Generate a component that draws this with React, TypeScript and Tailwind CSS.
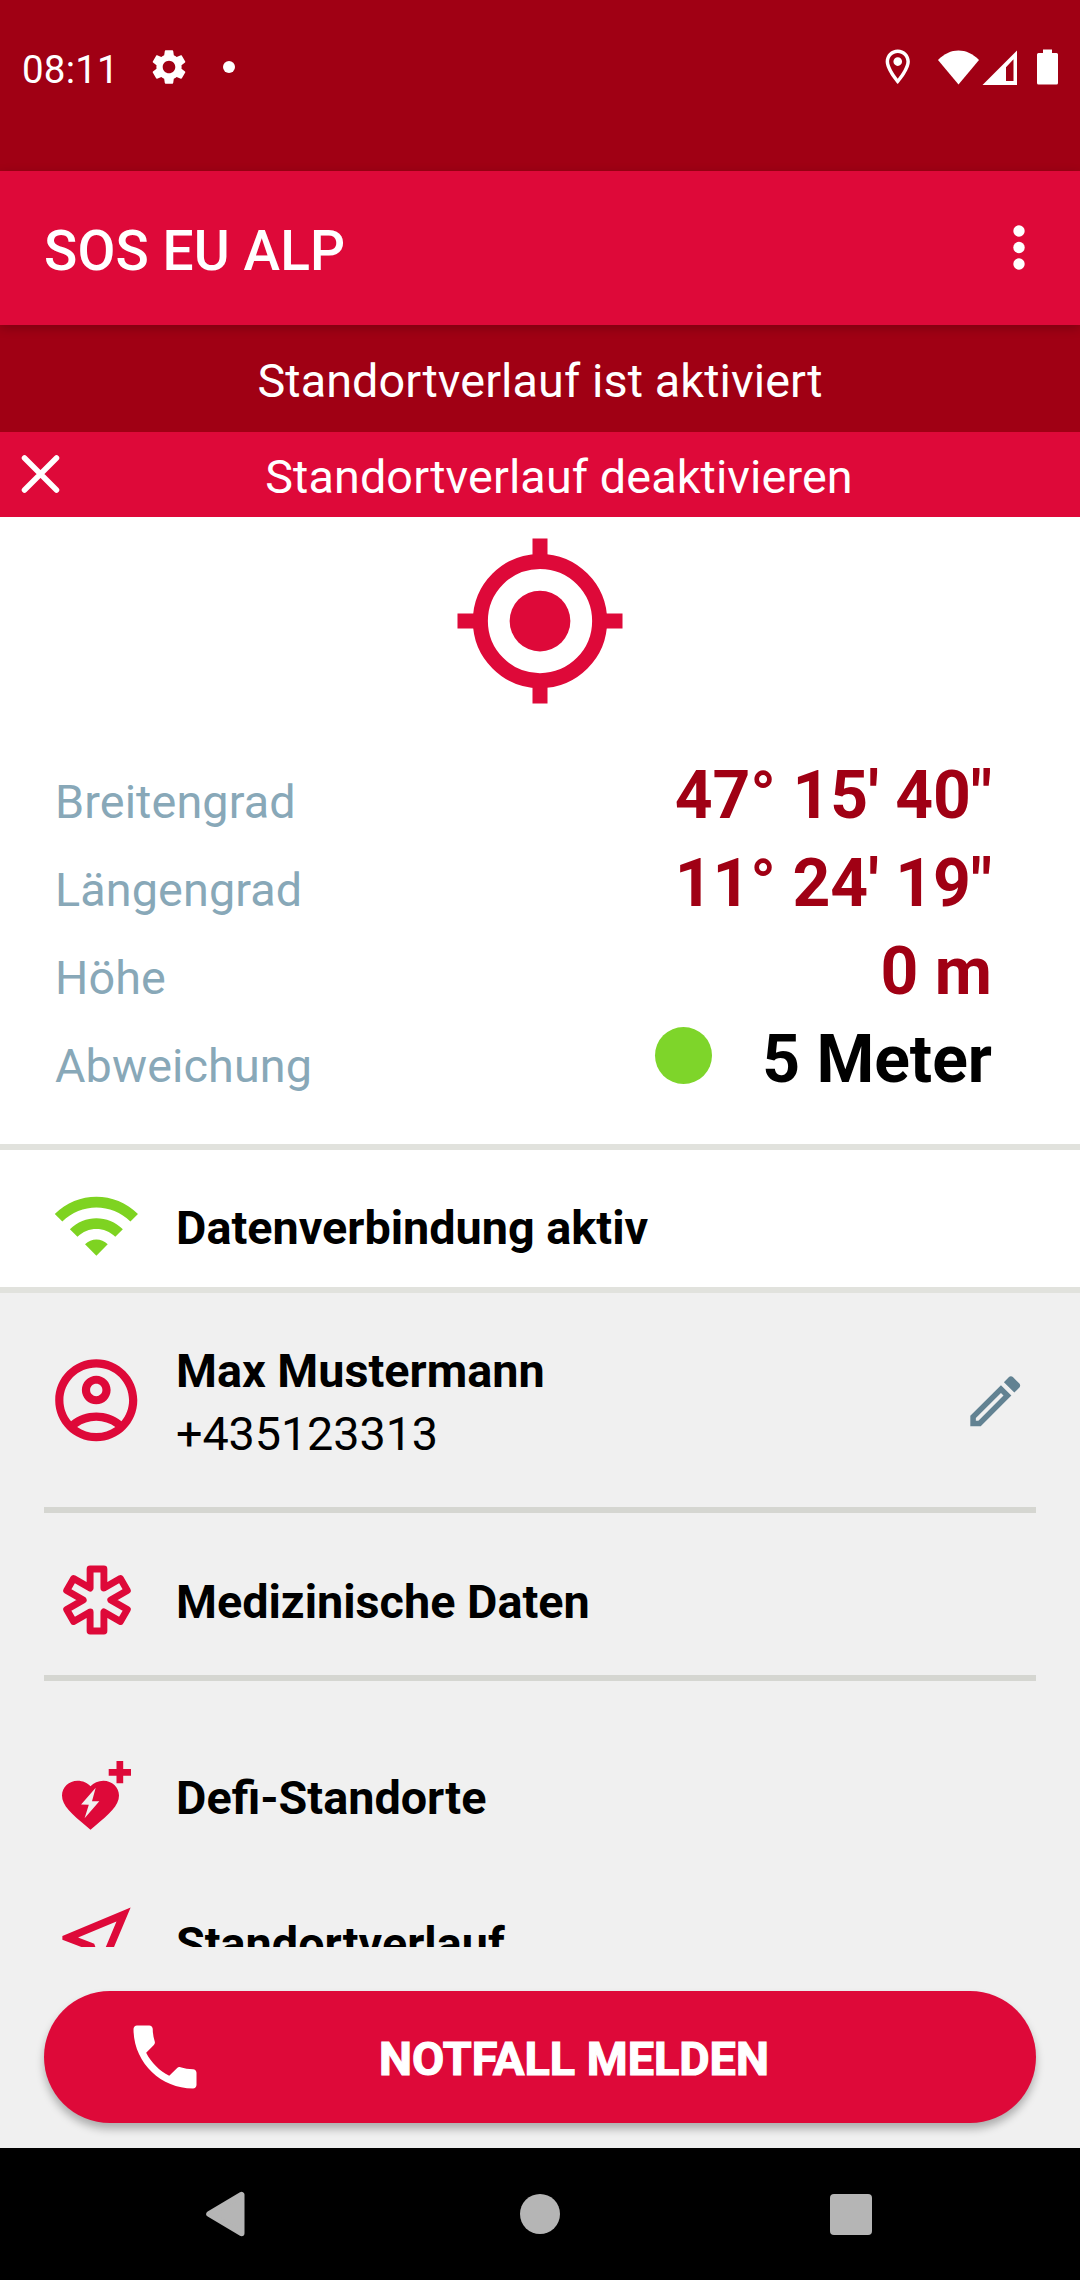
import type { ReactNode } from "react";

const RED = "#de0939";

function Path({ size, d, className = "" }: { size: number; d: string; className?: string }) {
  return (
    <svg width={size} height={size} viewBox="0 0 24 24" fill="currentColor" className={`shrink-0 ${className}`}>
      <path d={d} />
    </svg>
  );
}

const GEAR =
  "M19.14 12.94c.04-.3.06-.61.06-.94 0-.32-.02-.64-.07-.94l2.03-1.58c.18-.14.23-.41.12-.61l-1.92-3.32c-.12-.22-.37-.29-.59-.22l-2.39.96c-.5-.38-1.03-.7-1.62-.94l-.36-2.54c-.04-.24-.24-.41-.48-.41h-3.84c-.24 0-.43.17-.47.41l-.36 2.54c-.59.24-1.13.57-1.62.94l-2.39-.96c-.22-.08-.47 0-.59.22L2.74 8.87c-.12.21-.08.47.12.61l2.03 1.58c-.05.3-.09.63-.09.94s.02.64.07.94l-2.03 1.58c-.18.14-.23.41-.12.61l1.92 3.32c.12.22.37.29.59.22l2.39-.96c.5.38 1.03.7 1.62.94l.36 2.54c.05.24.24.41.48.41h3.84c.24 0 .44-.17.47-.41l.36-2.54c.59-.24 1.13-.56 1.62-.94l2.39.96c.22.08.47 0 .59-.22l1.92-3.32c.12-.22.07-.47-.12-.61l-2.01-1.58zM12 15.6c-1.98 0-3.6-1.62-3.6-3.6s1.62-3.6 3.6-3.6 3.6 1.62 3.6 3.6-1.62 3.6-3.6 3.6z";
const PIN =
  "M12 2C8.13 2 5 5.13 5 9c0 5.25 7 13 7 13s7-7.75 7-13c0-3.87-3.13-7-7-7zM7 9c0-2.76 2.24-5 5-5s5 2.24 5 5c0 2.88-2.88 7.19-5 9.88C9.92 16.21 7 11.85 7 9zM12 6.5a2.5 2.5 0 1 0 0 5 2.5 2.5 0 0 0 0-5z";
const WIFI =
  "M1 9l2 2c4.97-4.97 13.03-4.97 18 0l2-2C16.93 2.93 7.08 2.93 1 9zm8 8l3 3 3-3c-1.65-1.66-4.34-1.66-6 0zm-4-4l2 2c2.76-2.76 7.24-2.76 10 0l2-2C15.14 9.14 8.87 9.14 5 13z";
const ACCOUNT =
  "M12 2C6.48 2 2 6.48 2 12s4.48 10 10 10 10-4.48 10-10S17.52 2 12 2zM7.35 18.5C8.66 17.56 10.26 17 12 17s3.34.56 4.65 1.5C15.34 19.44 13.74 20 12 20s-3.34-.56-4.65-1.5zm10.79-1.38C16.45 15.8 14.32 15 12 15s-4.45.8-6.14 2.12C4.7 15.73 4 13.95 4 12c0-4.42 3.58-8 8-8s8 3.58 8 8c0 1.95-.7 3.73-1.86 5.12zM12 6c-1.93 0-3.5 1.57-3.5 3.5S10.07 13 12 13s3.5-1.57 3.5-3.5S13.93 6 12 6zm0 5c-.83 0-1.5-.67-1.5-1.5S11.17 8 12 8s1.5.67 1.5 1.5S12.83 11 12 11z";
const EDIT =
  "M14.06 9.02l.92.92L5.92 19H5v-.92l9.06-9.06M17.66 3c-.25 0-.51.1-.7.29l-1.83 1.83 3.75 3.75 1.83-1.83c.39-.39.39-1.02 0-1.41l-2.34-2.34c-.2-.2-.45-.29-.71-.29zm-3.6 3.19L3 17.25V21h3.75L17.81 9.94l-3.75-3.75z";
const NEAR_ME =
  "M17.27 6.73l-4.24 10.13-1.32-3.42-.32-.83-.82-.32-3.43-1.33 10.13-4.23M21 3L3 10.53v.98l6.84 2.65L12.48 21h.98L21 3z";
const CALL =
  "M6.62 10.79c1.44 2.83 3.76 5.14 6.59 6.59l2.2-2.2c.27-.27.67-.36 1.02-.24 1.12.37 2.33.57 3.57.57.55 0 1 .45 1 1V20c0 .55-.45 1-1 1-9.39 0-17-7.61-17-17 0-.55.45-1 1-1h3.5c.55 0 1 .45 1 1 0 1.25.2 2.45.57 3.57.11.35.03.74-.25 1.02l-2.2 2.2z";
const HEART =
  "M12 21.35l-1.45-1.32C5.4 15.36 2 12.28 2 8.5 2 5.42 4.42 3 7.5 3c1.74 0 3.41.81 4.5 2.09C13.09 3.81 14.76 3 16.5 3 19.58 3 22 5.42 22 8.5c0 3.78-3.4 6.86-8.55 11.54L12 21.35z";

function StatusBar() {
  return (
    <div className="flex h-[171px] items-start bg-[#a00014] pt-[45px] text-white">
      <span className="ml-[22px] w-[125.5px] text-[38.5px] leading-[50px] tracking-[0.2px]">08:11</span>
      <Path size={42} d={GEAR} className="mt-[1px]" />
      <span className="mt-4 ml-[33.5px] h-3 w-3 rounded-full bg-white" />
      <Path size={41.5} d={PIN} className="mt-[1px] ml-auto" />
      <svg width="139" height="40" viewBox="937 47 139 40" fill="currentColor" className="mt-[2px] ml-[19px] mr-1 shrink-0">
        <path d="M938 60C950 47.2 967 47.2 979 60L958.5 84.5z" />
        <path fillRule="evenodd" d="M1017 50.5V85h-34.5zM1013.5 59.3L1006 67.3V81h7.5z" />
        <path d="M1043 49.500h9v3.500h4.500q1.500 0 1.500 1.500v28.500q0 1.500-1.500 1.500h-18q-1.500 0-1.500-1.500v-28.500q0-1.500 1.500-1.500h4.500z" />
      </svg>
    </div>
  );
}

function AppBar() {
  return (
    <header className="relative z-10 flex h-[154px] items-center justify-between bg-[#de0939] pr-[55px] pl-11 text-white shadow-[0_3px_10px_rgba(0,0,0,0.22)]">
      <h1 className="pt-[6px] text-[55px] leading-[70px] font-medium tracking-[0.1px]">SOS EU ALP</h1>
      <svg width="12" height="45" viewBox="0 0 12 45" fill="currentColor" className="mb-px">
        <circle cx="6" cy="6" r="5.7" />
        <circle cx="6" cy="22.500" r="5.7" />
        <circle cx="6" cy="39" r="5.7" />
      </svg>
    </header>
  );
}

function Value({ label, value, tone, dot }: { label: string; value: string; tone: string; dot?: boolean }) {
  return (
    <div className="flex h-[88px] items-baseline">
      <span className="flex-1 text-[46.75px] leading-[60px] tracking-[0.1px] text-[#88a8b8]">{label}</span>
      {dot && <span className="mr-[50px] mb-[9px] h-[57px] w-[57px] self-center rounded-full bg-[#7ed52a]" />}
      <span className={`text-[66px] leading-[88px] font-bold ${tone}`}>{value}</span>
    </div>
  );
}

function Row({ icon, children, className }: { icon: ReactNode; children: ReactNode; className: string }) {
  return (
    <div className={`flex shrink-0 items-center ${className}`}>
      <span className="mr-[27px] flex w-[105px] shrink-0 justify-center text-[#de0939]">{icon}</span>
      {children}
    </div>
  );
}

function Label({ children }: { children: ReactNode }) {
  return <span className="text-[46.75px] leading-[60px] font-bold text-black">{children}</span>;
}

export default function App() {
  return (
    <div className="flex h-[2280px] w-[1080px] flex-col overflow-hidden bg-[#f0f0f0] font-['Roboto',sans-serif]">
      <StatusBar />
      <AppBar />

      <div className="flex h-[107px] items-center justify-center bg-[#a00014] pt-[5px] text-[46.75px] leading-[60px] tracking-[0.1px] text-white">
        Standortverlauf ist aktiviert
      </div>
      <button className="flex h-[85px] items-center bg-[#de0939] text-white">
        <svg width="82" height="60" viewBox="0 0 82 60" className="shrink-0" stroke="#fff" strokeWidth="5.5" strokeLinecap="round">
          <path d="M24.500 13L56.500 45M56.500 13L24.500 45" />
        </svg>
        <span className="mr-11 flex-1 pt-[5px] text-center text-[46.75px] leading-[60px] tracking-[0.1px]">
          Standortverlauf deaktivieren
        </span>
      </button>

      <section className="flex h-[633px] flex-col border-b-[6px] border-[#e1e2dd] bg-white pr-[88px] pl-[55px]">
        <svg width="180" height="180" viewBox="0 0 24 24" className="mt-[14px] ml-[395px] shrink-0" fill={RED}>
          <circle cx="12" cy="12" r="4.05" />
          <circle cx="12" cy="12" r="7.950" fill="none" stroke={RED} strokeWidth="2" />
          <path d="M11 1h2v3h-2zM11 20h2v3h-2zM1 11h3v2H1zM20 11h3v2h-3z" />
        </svg>
        <div className="mt-[41px]">
          <Value label="Breitengrad" value={"47° 15' 40\""} tone="text-[#a00014]" />
          <Value label="Längengrad" value={"11° 24' 19\""} tone="text-[#a00014]" />
          <Value label="Höhe" value="0 m" tone="text-[#a00014]" />
          <Value label="Abweichung" value="5 Meter" tone="text-black" dot />
        </div>
      </section>

      <section className="h-[143px] border-b-[6px] border-[#e1e2dd] bg-white px-11">
        <Row className="h-[137px]" icon={<Path size={90.75} d={WIFI} className="mt-[14px] text-[#7ed321]" />}>
          <div className="pt-[19px]">
            <Label>Datenverbindung aktiv</Label>
          </div>
        </Row>
      </section>

      <section className="flex h-[654px] shrink-0 flex-col overflow-hidden px-11">
        <Row className="h-[220px] border-b-[6px] border-[#d5d6d1]" icon={<Path size={98.500} d={ACCOUNT} />}>
          <div className="flex flex-1 flex-col pt-[5px]">
            <Label>Max Mustermann</Label>
            <span className="mt-[3px] text-[46.75px] leading-[60px] tracking-[-0.1px] text-black">+435123313</span>
          </div>
          <Path size={66.5} d={EDIT} className="mr-2 mt-[2px] text-[#628292]" />
        </Row>
        <Row
          className="h-[168px] border-b-[6px] border-[#d5d6d1]"
          icon={
            <svg width="72" height="72" viewBox="-36 -36 72 72" className="mt-[11px]" fill="none" stroke="currentColor" strokeWidth="6.9" strokeLinejoin="round">
              <path d="M-6.900-31H6.900V-11.950L23.400-21.480 30.300-9.520 13.800 0 30.300 9.520 23.400 21.480 6.900 11.950V31H-6.900V11.950L-23.400 21.480-30.300 9.520-13.800 0-30.300-9.520-23.400-21.480-6.900-11.950z" />
            </svg>
          }
        >
          <div className="pt-4">
            <Label>Medizinische Daten</Label>
          </div>
        </Row>
        <Row
          className="mt-11 h-[146px]"
          icon={
            <svg width="70" height="70" viewBox="62 1761 70 70" className="mb-[4px]" fill="currentColor">
              <path d={HEART} transform="translate(56.300 1772.700) scale(2.850 2.670)" />
              <path d="M116.500 1761h6.700v7.900h7.800v6.800h-7.800v7.600h-6.700v-7.600h-7.800v-6.800h7.800z" />
              <path fill="#f0f0f0" d="M95.700 1787.700L92 1801.200L99.300 1801.300L84.600 1818.300L88.800 1804.700L81.100 1804.400z" />
            </svg>
          }
        >
          <Label>Defi-Standorte</Label>
        </Row>
        <Row className="h-[146px]" icon={<Path size={91} d={NEAR_ME} className="mb-[6px]" />}>
          <Label>Standortverlauf</Label>
        </Row>
      </section>

      <div className="flex h-[201px] flex-col px-11 pt-11">
        <button className="flex h-[132px] shrink-0 items-center rounded-full bg-[#de0939] text-white shadow-[0_6px_9px_rgba(0,0,0,0.28)]">
          <Path size={84} d={CALL} className="ml-[79px]" />
          <span className="ml-[172px] pt-[4px] text-[46.75px] leading-[60px] font-bold [-webkit-text-stroke:1.2px_white]">
            NOTFALL MELDEN
          </span>
        </button>
      </div>

      <nav className="flex h-[132px] shrink-0 items-center bg-black text-[#b5b5b5]">
        <svg width="39" height="46" viewBox="0 0 39 46" fill="currentColor" stroke="currentColor" strokeWidth="6" strokeLinejoin="round" className="ml-[206px]">
          <path d="M3.200 23L35.500 3.800V42.200z" />
        </svg>
        <span className="ml-[275px] h-10 w-10 rounded-full bg-[#b5b5b5]" />
        <span className="ml-[270px] mt-px h-[41.5px] w-[41.5px] rounded-[4px] bg-[#b5b5b5]" />
      </nav>
    </div>
  );
}
